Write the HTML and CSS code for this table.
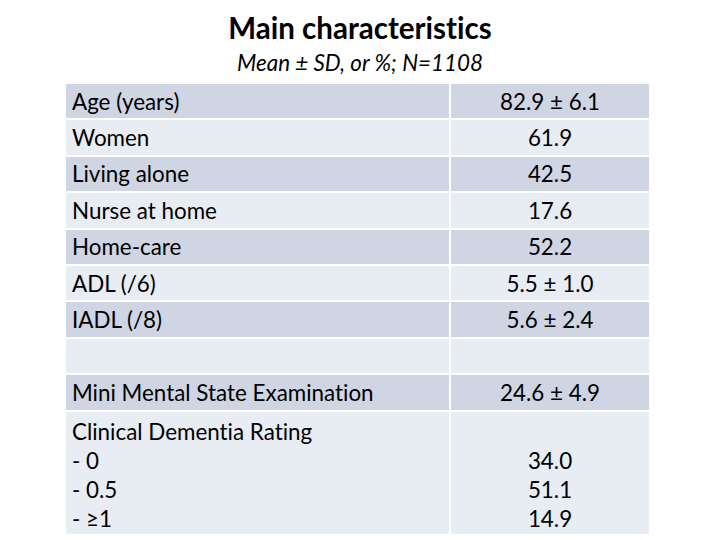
FILE: index.html
```html
<!DOCTYPE html>
<html lang="en">
<head>
<meta charset="utf-8">
<title>Main characteristics</title>
<link rel="stylesheet" href="styles.css">
</head>
<body>
<div class="slide">
  <header class="head">
    <h1 class="title">Main characteristics</h1>
    <p class="subtitle">Mean ± SD, or %; N=1108</p>
  </header>
  <div class="table">
    <div class="cell label dark">Age (years)</div><div class="cell value dark">82.9 ± 6.1</div>
    <div class="cell label light">Women</div><div class="cell value light">61.9</div>
    <div class="cell label dark">Living alone</div><div class="cell value dark">42.5</div>
    <div class="cell label light">Nurse at home</div><div class="cell value light">17.6</div>
    <div class="cell label dark">Home-care</div><div class="cell value dark">52.2</div>
    <div class="cell label light">ADL (/6)</div><div class="cell value light">5.5 ± 1.0</div>
    <div class="cell label dark">IADL (/8)</div><div class="cell value dark">5.6 ± 2.4</div>
    <div class="cell label light"></div><div class="cell value light"></div>
    <div class="cell label dark">Mini Mental State Examination</div><div class="cell value dark">24.6 ± 4.9</div>
    <div class="cell label light multi">
      <span>Clinical Dementia Rating</span>
      <span>- 0</span>
      <span>- 0.5</span>
      <span>- ≥1</span>
    </div>
    <div class="cell value light multi">
      <span>&nbsp;</span>
      <span>34.0</span>
      <span>51.1</span>
      <span>14.9</span>
    </div>
  </div>
</div>
</body>
</html>
```

FILE: styles.css
```css
html, body {
  margin: 0;
  padding: 0;
  background: #ffffff;
}

.slide {
  width: 720px;
  height: 540px;
  overflow: hidden;
  font-family: Lato, "Open Sans", "Liberation Sans", sans-serif;
  font-variant-ligatures: none;
  font-feature-settings: "liga" 0, "clig" 0;
  color: #000000;
}

.head {
  padding-top: 10px;
  text-align: center;
}

.title {
  margin: 0;
  font-size: 29.5px;
  font-weight: 700;
  line-height: 36px;
}

.subtitle {
  margin: 3px 0 0;
  font-size: 22.4px;
  font-style: italic;
  line-height: 28px;
}

.table {
  margin: 7px 0 0 66px;
  width: 583px;
  display: grid;
  grid-template-columns: 383px 198px;
  grid-auto-rows: 34.4px;
  gap: 2px;
  background: #ffffff;
}

.cell {
  display: flex;
  align-items: center;
  font-size: 22.4px;
  line-height: 29px;
}

.label {
  padding-left: 6px;
}

.value {
  justify-content: center;
}

.dark {
  background: #cfd5e3;
}

.light {
  background: #e8ecf3;
}

.multi {
  height: 122px;
  flex-direction: column;
  align-items: flex-start;
  justify-content: flex-start;
  padding-top: 5px;
  box-sizing: border-box;
}

.value.multi {
  align-items: center;
}
```
